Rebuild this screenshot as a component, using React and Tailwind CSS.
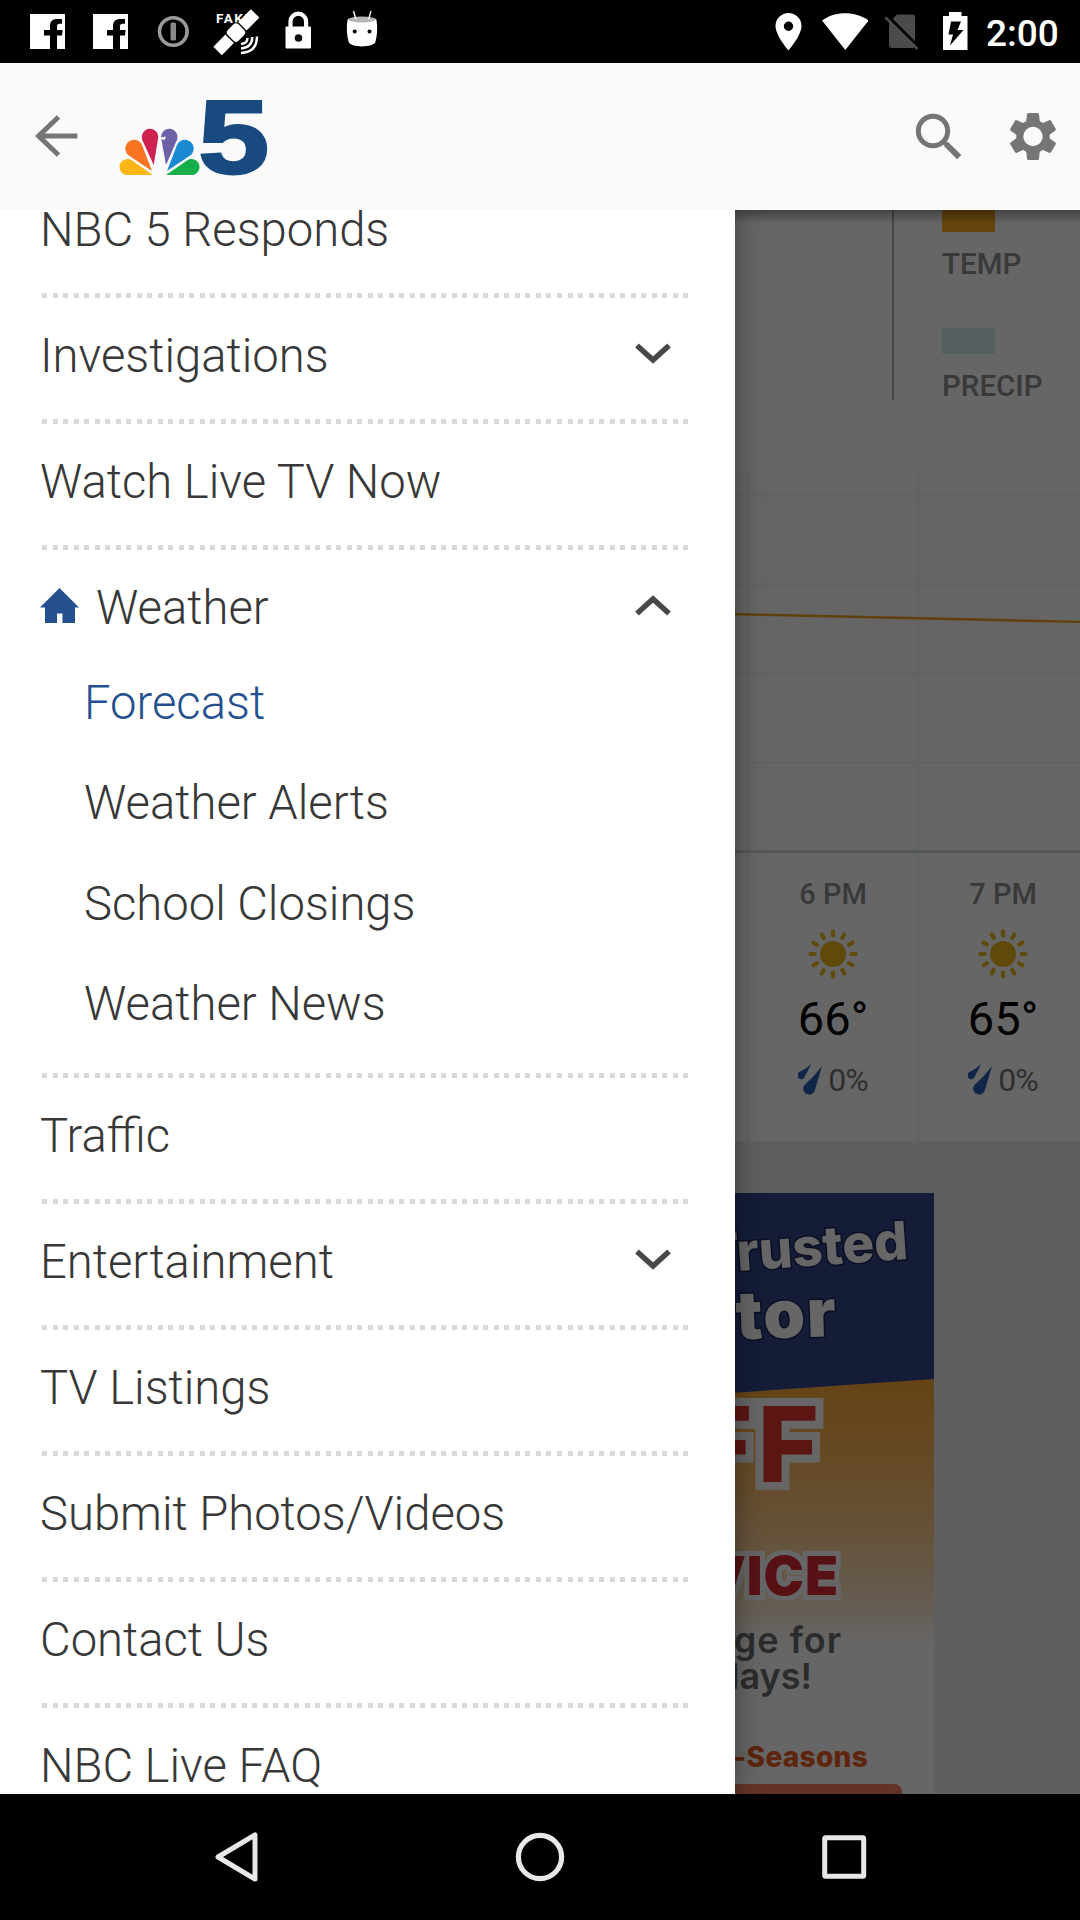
import React from "react";

const MENU = [
  { label: "NBC 5 Responds" },
  { label: "Investigations", chevron: "down" },
  { label: "Watch Live TV Now" },
  {
    label: "Weather",
    chevron: "up",
    home: true,
    children: ["Forecast", "Weather Alerts", "School Closings", "Weather News"],
  },
  { label: "Traffic" },
  { label: "Entertainment", chevron: "down" },
  { label: "TV Listings" },
  { label: "Submit Photos/Videos" },
  { label: "Contact Us" },
  { label: "NBC Live FAQ" },
];

const HOURS = [
  { time: "6 PM", temp: "66°", rain: "0%" },
  { time: "7 PM", temp: "65°", rain: "0%" },
];

function Facebook() {
  return (
    <svg className="h-[35px] w-[35px]" viewBox="0 0 35 35">
      <path
        fill="#fff"
        d="M0 0h35v35h-8V21.500h5l.6-5.500H27v-3.500c0-1.800.6-2.700 2.500-2.700H32V5h-4.500C22.500 5 20 7.500 20 12v4h-6v5.500h6V35H0z"
      />
    </svg>
  );
}

function StatusBar() {
  return (
    <header className="flex h-[63px] shrink-0 items-center bg-black pl-[30px] pr-[20px] text-white">
      <Facebook />
      <div className="ml-[28px]">
        <Facebook />
      </div>
      <svg className="ml-[29px] h-[63px] w-[33px]" viewBox="157 0 33 63">
        <circle cx="173.300" cy="31.500" r="13.800" fill="none" stroke="#9a9a9a" strokeWidth="3.600" />
        <rect x="170.500" y="22.500" width="5.500" height="18" rx="1.500" fill="#8a8a8a" />
      </svg>
      <svg className="ml-[23px] h-[63px] w-[46px]" viewBox="213 0 46 63">
        <text x="216" y="23" fontSize="13.500" fontWeight="700" fill="#fff" textLength="36" fontFamily="Roboto, sans-serif">
          FAKE
        </text>
        <g transform="rotate(-45 236 32.500)" fill="#fff">
          <rect x="210" y="26.500" width="17" height="12" />
          <rect x="228" y="24.500" width="16" height="16" rx="4" stroke="#000" strokeWidth="1" />
          <rect x="245" y="26.500" width="18" height="12" />
        </g>
        <g fill="none" stroke="#fff" strokeWidth="2.400">
          <path d="M247.500 38q0 5.500-6.500 6M252.300 37q0 10.500-11.300 11.500M257 36.500q0 15.500-16 16.500" />
        </g>
      </svg>
      <svg className="ml-[26px] h-[63px] w-[27px]" viewBox="285 0 27 63">
        <path d="M290.500 28v-6.500a7.800 7.800 0 0 1 15.600 0V28" fill="none" stroke="#fff" strokeWidth="4.200" />
        <rect x="285.500" y="26.500" width="25.500" height="22" rx="1" fill="#fff" />
        <circle cx="298.500" cy="38" r="3.800" fill="#111" />
      </svg>
      <svg className="ml-[34px] h-[63px] w-[32px]" viewBox="346 0 32 63">
        <path d="M347.500 20c0-4 29-4 29 0 1.200 7 .8 15-1 21.500-1.500 6.500-25.500 6.500-27 0-1.800-6.500-2.200-14.500-1-21.500z" fill="#fff" />
        <ellipse cx="362" cy="19.500" rx="13.500" ry="3" fill="#b5b5b5" />
        <path d="M353.500 11l2.300 8M371 11l-2.300 8" stroke="#fff" strokeWidth="1.400" />
        <circle cx="354.700" cy="31.500" r="2" />
        <circle cx="369.500" cy="31.500" r="2" />
      </svg>

      <svg className="ml-auto h-[63px] w-[27px]" viewBox="775 0 27 63">
        <path
          fillRule="evenodd"
          fill="#fff"
          d="M788.500 13a13 13 0 0 0-13 13c0 9.500 13 24.500 13 24.500s13-15 13-24.500a13 13 0 0 0-13-13zm0 8.500a4.700 4.700 0 1 1 0 9.400 4.700 4.700 0 0 1 0-9.400z"
        />
      </svg>
      <svg className="ml-[20px] h-[63px] w-[46px]" viewBox="822 0 46 63">
        <path d="M822 20.500C834.500 10.700 856 10.700 868.500 20.500L845.300 50z" fill="#fff" />
      </svg>
      <svg className="ml-[16px] h-[63px] w-[36px]" viewBox="884 0 36 63">
        <path d="M897 14.500h15q3 0 3 3v28q0 2.500-3 2.500h-20q-3 0-3-3V22.500z" fill="#4b4b4b" />
        <path d="M888.500 17.500l31 31" stroke="#000" strokeWidth="4" />
        <path d="M885.500 17.500l32 31.500" stroke="#4b4b4b" strokeWidth="2.600" />
      </svg>
      <svg className="ml-[23px] h-[63px] w-[25px]" viewBox="943 0 25 63">
        <path d="M949 12h12.500v4h6v34H943V16h6z" fill="#fff" />
        <path d="M951 21.500h10l-3.500 8.500h6L950 45.500l3-11h-4.500z" fill="#000" />
      </svg>
      <span className="ml-[18px] w-[74px] pt-[3px] text-[37px] font-medium leading-none">2:00</span>
    </header>
  );
}

/* Feather outline: a circle joined to a tip by its two tangent lines. */
function feather(cx, cy, r, tx, ty) {
  const dx = tx - cx;
  const dy = ty - cy;
  const base = Math.atan2(dy, dx);
  const a = Math.acos(r / Math.hypot(dx, dy));
  const p = (t) => `${(cx + r * Math.cos(t)).toFixed(2)} ${(cy + r * Math.sin(t)).toFixed(2)}`;
  return `M${tx} ${ty}L${p(base + a)}A${r} ${r} 0 1 1 ${p(base - a)}Z`;
}

const FEATHERS = [
  ["#fbb616", 127.5, 167, 8, 153, 175],
  ["#f97422", 134, 148.5, 8.7, 152, 171],
  ["#cf2150", 150, 137, 8.2, 153.700, 165],
  ["#6c61a8", 169.3, 137, 8.2, 166, 165],
  ["#1c8ad0", 185, 148.5, 8.7, 167, 171],
  ["#14ae4b", 191.500, 167, 8, 166, 175],
];

function AppBar() {
  return (
    <div className="flex h-[147px] shrink-0 items-center bg-[#fafafa] pl-[35px] pr-[24px]">
      <svg className="h-[147px] w-[43px]" viewBox="35 63 43 147">
        <path d="M77.300 136H39M58.500 117L38.500 136l20 19" fill="none" stroke="#757575" strokeWidth="5" />
      </svg>
      <svg className="ml-[41px] h-[147px] w-[150px] overflow-visible" viewBox="119 63 150 147">
        {FEATHERS.map(([c, ...f]) => (
          <path key={c} d={feather(...f)} fill={c} />
        ))}
        <path d="M160.500 137.500l5.500-1-1.500 3.500-4-1z" fill="#fafafa" />
        <text
          transform="translate(198.500 172.800) scale(1.230 1)"
          fontFamily="Liberation Sans, sans-serif"
          fontWeight="700"
          fontSize="103"
          fill="#184a80"
          stroke="#184a80"
          strokeWidth="2.800"
        >
          5
        </text>
      </svg>
      <svg className="ml-auto h-[147px] w-[47px]" viewBox="915 63 47 147">
        <circle cx="933" cy="131" r="14.700" fill="none" stroke="#757575" strokeWidth="5" />
        <path d="M943 141l3.500 3.500" stroke="#757575" strokeWidth="4" />
        <path d="M946 144l13.200 13.200" stroke="#757575" strokeWidth="6" />
      </svg>
      <svg className="ml-[48px] h-[147px] w-[46px]" viewBox="1010.400 63 46 147">
        <g fill="#757575">
          {[0, 60, 120, 180, 240, 300].map((a) => (
            <path
              key={a}
              transform={`rotate(${a} 1033.400 136.500)`}
              d="M1029 113h8.800q1.400 0 1.600 1.500l1 9h-14l1-9q.2-1.500 1.600-1.500z"
            />
          ))}
        </g>
        <circle cx="1033.400" cy="136.500" r="13.200" fill="none" stroke="#757575" strokeWidth="7" />
      </svg>
    </div>
  );
}

function Chevron({ dir }) {
  return (
    <svg className="-mt-[2px] ml-auto h-[22px] w-[36px]" viewBox="0 0 36 22">
      <path
        d={dir === "down" ? "M2 2.500L18 17 34 2.500" : "M2 18.500L18 4 34 18.500"}
        fill="none"
        stroke="#484848"
        strokeWidth="5.400"
      />
    </svg>
  );
}

function MenuItem({ item }) {
  return (
    <li className="shrink-0">
      <div className="flex h-[113px] items-center pl-[40px] pr-[64px]">
        {item.home && (
          <svg className="-mt-[2px] mr-[17px] h-[35px] w-[39px]" viewBox="0 0 39 35">
            <path d="M19.500 0L39 19.500h-4V35H22.500v-9.500h-5.500V35H5V19.500H0z" fill="#25508f" />
          </svg>
        )}
        <span className="pt-[4px]">{item.label}</span>
        {item.chevron && <Chevron dir={item.chevron} />}
      </div>
      {item.children ? (
        <ul className="-mt-[11px] pb-[19px] pl-[84px]">
          {item.children.map((c, i) => (
            <li key={c} className={i === 0 ? "flex h-[100.500px] items-center pt-[2px] text-[#25508f]" : "flex h-[100.500px] items-center pt-[2px]"}>
              {c}
            </li>
          ))}
        </ul>
      ) : (
        <div className="h-[8px]" />
      )}
      <div className="ml-[42px] h-[5px] w-[647px] bg-[repeating-linear-gradient(90deg,#d9d9d9_0px,#d9d9d9_5px,transparent_5px,transparent_10.510px)]" />
    </li>
  );
}

function Legend({ label, swatch }) {
  return (
    <div>
      <div className={`h-[26px] w-[53px] ${swatch}`} />
      <div className="mt-[15px] text-[29.500px] font-medium leading-[34px] text-[#8f8f8f]">{label}</div>
    </div>
  );
}

function HourCard({ hour }) {
  return (
    <div className="flex w-[170px] shrink-0 flex-col items-center border-l-2 border-[#f0f2f2] pt-[23px]">
      <div className="text-[29px] font-medium leading-[36px] text-[#8f8f8f]">{hour.time}</div>
      <svg className="mt-[17px] h-[50px] w-[50px]" viewBox="-25 -25 50 50">
        <circle r="13" fill="#f0b81c" />
        {[0, 30, 60, 90, 120, 150, 180, 210, 240, 270, 300, 330].map((a) => (
          <path key={a} transform={`rotate(${a})`} d="M0-18.500v-4" stroke="#f0b81c" strokeWidth="4.200" strokeLinecap="round" />
        ))}
      </svg>
      <div className="mt-[12px] text-[47px] leading-[56px] text-black">{hour.temp}</div>
      <div className="mt-[14px] flex items-center text-[32px] font-normal leading-[38px] text-[#777]">
        <svg className="mr-[5px] h-[32px] w-[25px] shrink-0" viewBox="0 0 25 32">
          <path d="M24 2Q20.500 14 17 26a6 6 0 1 1-11-4.500Q16 13 24 2z" fill="#285fb4" />
          <path d="M13 0Q10.500 6 7 12a3.800 3.800 0 1 1-5.500-4Q8 5 13 0z" fill="#285fb4" />
        </svg>
        <span className="tracking-[-1px]">{hour.rain}</span>
      </div>
    </div>
  );
}

function AdBanner() {
  return (
    <svg className="mx-auto mt-[52px] block h-[1575px] w-[788px] shrink-0" viewBox="146 1193 788 1575">
      <defs>
        <linearGradient id="warm" x1="0" x2="0" y1="1375" y2="1645" gradientUnits="userSpaceOnUse">
          <stop offset="0" stopColor="#fda834" />
          <stop offset="0.400" stopColor="#fdbd6c" />
          <stop offset="0.800" stopColor="#fde0bd" />
          <stop offset="1" stopColor="#ffffff" />
        </linearGradient>
      </defs>
      <rect x="146" y="1193" width="788" height="1575" fill="#fff" />
      <rect x="146" y="1370" width="788" height="275" fill="url(#warm)" />
      <path d="M146 1193h788v186L146 1433z" fill="#32468c" />
      <g fontFamily="Inter, sans-serif" fontWeight="800" textAnchor="end">
        <g fill="#fff" stroke="#1b2555" strokeWidth="3" paintOrder="stroke">
          <text transform="translate(909 1259) rotate(-4)" fontSize="53">
            Trusted
          </text>
          <text transform="translate(838 1336) rotate(-2)" fontSize="67" fontWeight="900" letterSpacing="1.500">
            Contractor
          </text>
        </g>
        <text x="824" y="1482" fontSize="105" letterSpacing="5" fill="#e6382f" stroke="#fff" strokeWidth="16" paintOrder="stroke">
          OFF
        </text>
        <text x="839" y="1595" fontSize="54" fontWeight="900" letterSpacing="1" fill="#d92b35" stroke="#fff" strokeWidth="10" paintOrder="stroke">
          SERVICE
        </text>
        <g fill="#6c6c6c" fontWeight="600" fontSize="36">
          <text x="842" y="1652.500" letterSpacing="1">
            No charge for
          </text>
          <text x="812" y="1689">90 days!</text>
        </g>
        <text x="868" y="1767" fontSize="28" letterSpacing="0.300" fill="#ea5b24">
          Four-Seasons
        </text>
      </g>
      <rect x="178" y="1784" width="724" height="90" rx="8" fill="#f5805f" />
    </svg>
  );
}

function WeatherPage() {
  return (
    <div className="flex h-full flex-col overflow-hidden bg-[#ededed]">
      <section className="flex h-[262px] shrink-0 justify-end bg-white">
        <div className="h-[190px] w-[2px] bg-[#b0b0b0]" />
        <div className="-mt-[4px] ml-[48px] flex w-[138px] flex-col gap-[47px]">
          <Legend label="TEMP" swatch="bg-[#ffaa1e]" />
          <Legend label="PRECIP" swatch="bg-[#d8eff2]" />
        </div>
      </section>
      <svg className="block h-[381px] w-full shrink-0" viewBox="0 472 1080 381">
        <rect y="472" width="1080" height="381" fill="#fcfcfc" />
        <g stroke="#f0f2f2" strokeWidth="2">
          <path d="M0 495.500H1080M0 584.500H1080M0 673.500H1080M0 763H1080M748 472V853M918 472V853" />
        </g>
        <path d="M0 851.500H1080" stroke="#d0dcdc" strokeWidth="3" />
        <path d="M578 610L748 614.500 918 618.300 1088 622" fill="none" stroke="#f0a01e" strokeWidth="2.400" />
      </svg>
      <section className="flex h-[288px] shrink-0 bg-white pl-[747px]">
        {HOURS.map((h) => (
          <HourCard key={h.time} hour={h} />
        ))}
      </section>
      <AdBanner />
    </div>
  );
}

function NavBar() {
  return (
    <footer className="flex h-[126px] shrink-0 items-center bg-black pl-[215px] pr-[213px]">
      <svg className="h-[50px] w-[44px]" viewBox="215 1832.500 44 50">
        <path d="M255 1835.500v44L218 1857.500z" fill="none" stroke="#e8e8e8" strokeWidth="5" strokeLinejoin="round" />
      </svg>
      <svg className="ml-auto mr-px h-[50px] w-[50px]" viewBox="-25 -25 50 50">
        <circle r="21.600" fill="none" stroke="#e8e8e8" strokeWidth="5.200" />
      </svg>
      <svg className="ml-auto h-[44px] w-[45px]" viewBox="0 0 45 44">
        <rect x="2.700" y="2.700" width="39" height="38.600" rx="1" fill="none" stroke="#e8e8e8" strokeWidth="5" />
      </svg>
    </footer>
  );
}

export default function App() {
  return (
    <div className="flex h-[1920px] w-[1080px] flex-col overflow-hidden bg-black font-['Roboto',sans-serif]">
      <StatusBar />
      <AppBar />
      <main className="relative min-h-0 flex-1 overflow-hidden">
        <WeatherPage />
        <div className="absolute inset-0 bg-black/60" />
        <div className="absolute inset-x-0 top-0 h-[14px] bg-gradient-to-b from-black/35 to-transparent" />
        <nav className="absolute inset-y-0 left-0 w-[735px] overflow-hidden bg-white shadow-[0_0_26px_rgba(0,0,0,0.4)]">
          <ul className="-mt-[38px] flex flex-col text-[47.200px] font-light leading-none text-[#383838]">
            {MENU.map((m) => (
              <MenuItem key={m.label} item={m} />
            ))}
          </ul>
        </nav>
      </main>
      <NavBar />
    </div>
  );
}
